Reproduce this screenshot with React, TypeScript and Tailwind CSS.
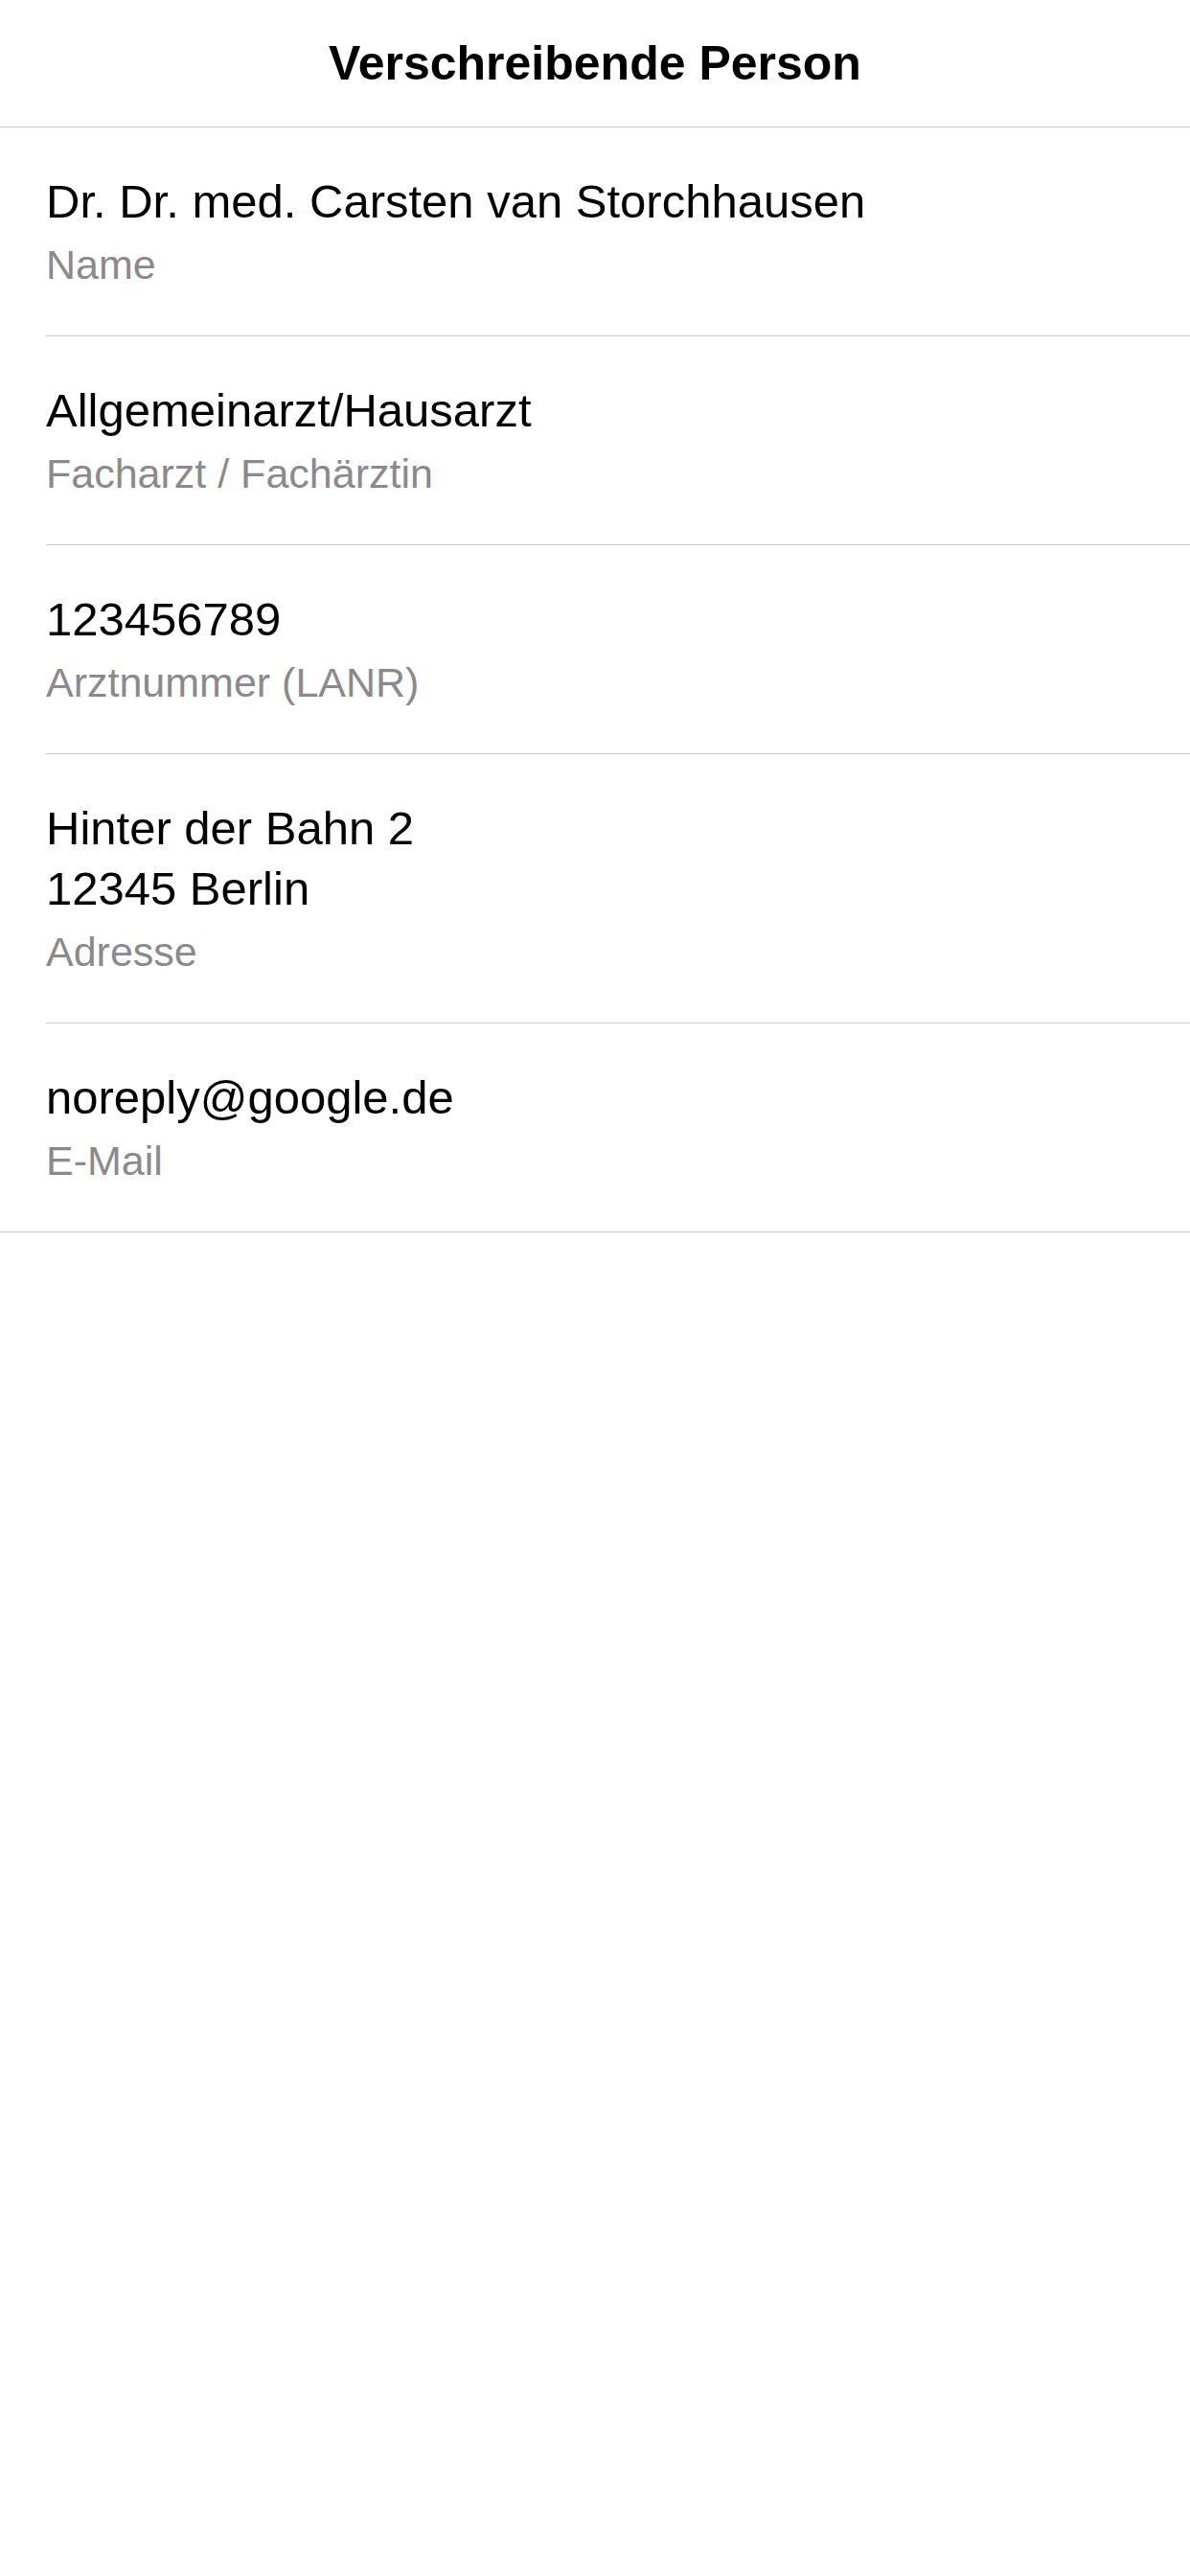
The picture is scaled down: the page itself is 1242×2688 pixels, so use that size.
import React from "react";

type Row = { lines: string[]; label: string };

const rows: Row[] = [
  { lines: ["Dr. Dr. med. Carsten van Storchhausen"], label: "Name" },
  { lines: ["Allgemeinarzt/Hausarzt"], label: "Facharzt / Fachärztin" },
  { lines: ["123456789"], label: "Arztnummer (LANR)" },
  { lines: ["Hinter der Bahn 2", "12345 Berlin"], label: "Adresse" },
  { lines: ["noreply@google.de"], label: "E-Mail" },
];

export default function App() {
  return (
    <div
      className="min-h-[2688px] w-[1242px] bg-white text-black"
      style={{ fontFamily: '"Liberation Sans", Arial, sans-serif' }}
    >
      <header className="flex h-[133px] items-center justify-center border-b border-[#c8c7cc]">
        <h1 className="text-[50px] font-bold leading-none">Verschreibende Person</h1>
      </header>
      <div className="border-b border-[#c8c7cc]">
        {rows.map((r, i) => (
          <div key={i} className="pl-[48px]">
            <div
              className={
                i < rows.length - 1
                  ? "border-b border-[#c8c7cc] pb-[50px] pt-[46px]"
                  : "pb-[50px] pt-[46px]"
              }
            >
              {r.lines.map((l, j) => (
                <div key={j} className="text-[49px] leading-[63px]">
                  {l}
                </div>
              ))}
              <div className="mt-[10px] text-[43px] leading-[48px] text-[#8a8a8e]">{r.label}</div>
            </div>
          </div>
        ))}
      </div>
    </div>
  );
}
